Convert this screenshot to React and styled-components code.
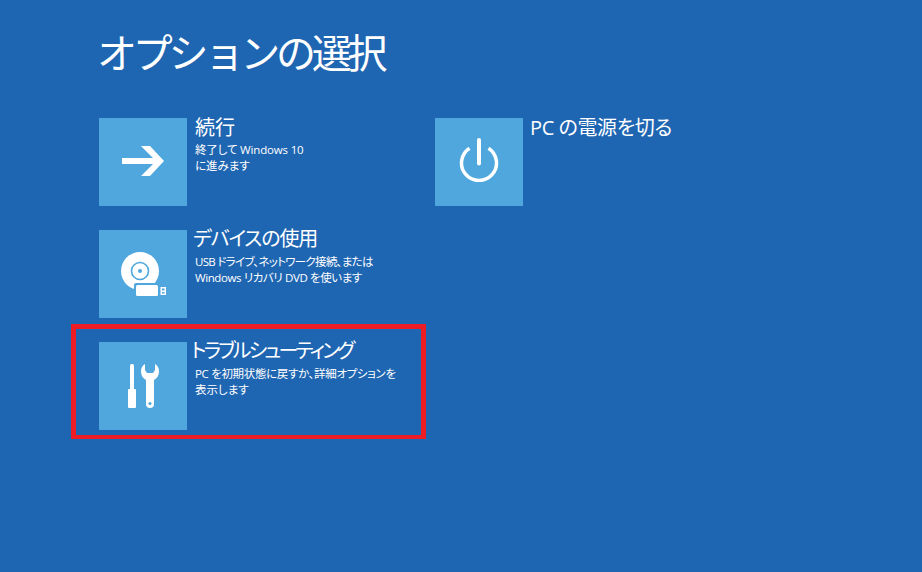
import React from "react";
import styled, { createGlobalStyle } from "styled-components";

const Global = createGlobalStyle`
  html, body { margin: 0; padding: 0; background: #1f66b2; }
  body { font-family: "Open Sans", "Noto Sans CJK JP", sans-serif; color: #fff; }
`;

const Page = styled.div`
  width: 922px;
  height: 572px;
  overflow: hidden;
  box-sizing: border-box;
  padding: 24px 0 0 99px;
  background: #1f66b2;
`;

const Heading = styled.h1`
  margin: 0 0 46px -2px;
  height: 48px;
  font-size: 40px;
  line-height: 58px;
  font-weight: 400;
  letter-spacing: -4.2px;
  white-space: nowrap;
`;

const Columns = styled.div`
  display: flex;
  gap: 24px;
`;

const Column = styled.div`
  width: 312px;
  display: flex;
  flex-direction: column;
  gap: 24px;
`;

const Option = styled.div`
  position: relative;
  display: flex;
  height: 88px;
`;

const Tile = styled.div`
  flex: none;
  width: 88px;
  height: 88px;
  background: #4fa7dd;
  display: flex;
  align-items: center;
  justify-content: center;
`;

const Body = styled.div`
  margin-left: 8px;
  margin-top: ${(p) => p.$top || 0}px;
  min-width: 0;
`;

const Name = styled.div`
  font-size: 20px;
  line-height: 20px;
  margin-left: ${(p) => p.$shift || 0}px;
  letter-spacing: ${(p) => p.$track || 0}px;
  font-feature-settings: "palt";
  white-space: nowrap;
`;

const Description = styled.div`
  margin-top: ${(p) => p.$gap}px;
  font-size: 11.5px;
  line-height: 16px;
  font-feature-settings: "palt";
  white-space: nowrap;
`;

const Line = styled.div`
  letter-spacing: ${(p) => p.$track || 0}px;
`;

const Highlight = styled.div`
  position: absolute;
  left: -28px;
  top: -18px;
  width: 345px;
  height: 106px;
  border: 5px solid #ee1c25;
  border-bottom-width: 4px;
  pointer-events: none;
`;

const ArrowSvg = styled.svg`
  margin-bottom: 2px;
`;

const DiscSvg = styled.svg`
  margin-left: 2px;
`;

const PowerSvg = styled.svg`
  margin-bottom: 4px;
`;

const ArrowIcon = () => (
  <ArrowSvg width="42" height="30" viewBox="0 0 42 30">
    <polygon points="19,0 28,0 42,15 28,30 19,30 31,18 0,18 0,12 31,12" fill="#fff" />
  </ArrowSvg>
);

const PowerIcon = () => (
  <PowerSvg width="40" height="44" viewBox="0 0 40 44" fill="none" stroke="#fff" strokeWidth="3.500">
    <path d="M10.500 10.300A17.500 17.500 0 1 0 29.500 10.300" />
    <path d="M20 2V25.500" strokeWidth="4" strokeLinecap="round" />
  </PowerSvg>
);

const DiscIcon = () => (
  <DiscSvg width="46" height="45" viewBox="0 0 46 45">
    <circle cx="19" cy="19" r="19" fill="#fff" />
    <circle cx="19" cy="19" r="8.500" fill="none" stroke="#4fa7dd" strokeWidth="1.600" />
    <circle cx="19" cy="19" r="2" fill="#4fa7dd" />
    <rect x="13" y="31" width="27" height="14" rx="2" fill="#4fa7dd" />
    <rect x="15" y="33" width="22" height="11" rx="1.500" fill="#fff" />
    <path d="M39.500 35H45V43H39.500ZM41 36.500V38.500H43.500V36.500ZM41 40V41.500H43.500V40Z" fill="#fff" fillRule="evenodd" />
  </DiscSvg>
);

const ToolsIcon = () => (
  <svg width="31" height="44" viewBox="0 0 31 44">
    <rect x="2" y="0" width="4" height="26" rx="1.500" fill="#fff" />
    <rect x="0" y="25" width="8" height="19" rx="1" fill="#fff" />
    <path
      d="M17 0C14 1.500 13 4.500 13 7.500C13 11.500 15 14.500 18 16V40A4 4 0 0 0 26 40V16C29 14.500 31 11.500 31 7.500C31 4.500 30 1.500 27 0V6L25 9H19L17 6Z"
      fill="#fff"
    />
    <circle cx="22" cy="39.500" r="1.500" fill="#4fa7dd" />
  </svg>
);

export default function App() {
  return (
    <Page>
      <Global />
      <Heading>オプションの選択</Heading>
      <Columns>
        <Column>
          <Option>
            <Tile><ArrowIcon /></Tile>
            <Body>
              <Name>続行</Name>
              <Description $gap={4}>
                <Line $track={-0.17}>終了して Windows 10</Line>
                <Line>に進みます</Line>
              </Description>
            </Body>
          </Option>
          <Option>
            <Tile><DiscIcon /></Tile>
            <Body $top={-1}>
              <Name $shift={-2} $track={-1.1}>デバイスの使用</Name>
              <Description $gap={5}>
                <Line $track={-0.7}>USB ドライブ、ネットワーク接続、または</Line>
                <Line $track={-0.4}>Windows リカバリ DVD を使います</Line>
              </Description>
            </Body>
          </Option>
          <Option>
            <Highlight />
            <Tile><ToolsIcon /></Tile>
            <Body $top={-1}>
              <Name $shift={-4} $track={-2.8}>トラブルシューティング</Name>
              <Description $gap={5}>
                <Line $track={-0.33}>PC を初期状態に戻すか、詳細オプションを</Line>
                <Line>表示します</Line>
              </Description>
            </Body>
          </Option>
        </Column>
        <Column>
          <Option>
            <Tile><PowerIcon /></Tile>
            <Body>
              <Name $shift={-1} $track={-0.4}>PC の電源を切る</Name>
            </Body>
          </Option>
        </Column>
      </Columns>
    </Page>
  );
}
